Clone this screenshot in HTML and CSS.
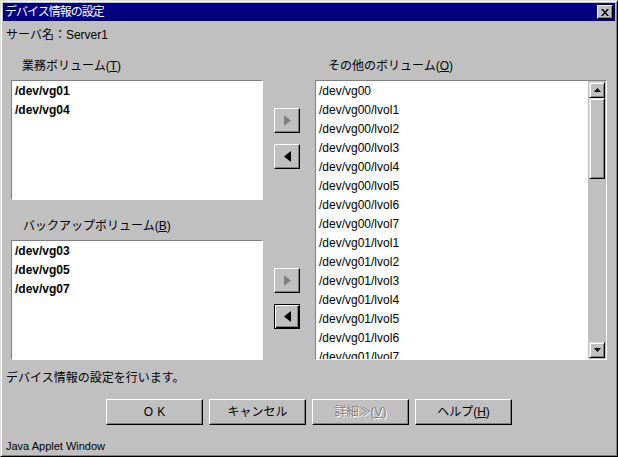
FILE: index.html
```html
<!DOCTYPE html>
<html lang="ja">
<head>
    <meta charset="UTF-8">
    <title>デバイス情報の設定</title>
    <link rel="stylesheet" href="styles.css">
</head>
<body>
    <div class="window">
        <!-- Title bar -->
        <div class="titlebar">
            <span class="title">デバイス情報の設定</span>
            <span class="close-btn">
                <svg width="8" height="7" viewBox="0 0 8 7"><path d="M0 0h2l2 2.4 2-2.4h2l-3 3.5 3 3.5h-2l-2-2.4-2 2.4h-2l3-3.5z" fill="#000"/></svg>
            </span>
        </div>

        <div class="client">
            <div class="server">サーバ名：Server1</div>

            <div class="main">
                <div class="left-col">
                    <div class="label">業務ボリューム(<u>T</u>)</div>
                    <div class="list list-short bold">
                        <div class="item">/dev/vg01</div>
                        <div class="item">/dev/vg04</div>
                    </div>
                    <div class="label label-second">バックアップボリューム(<u>B</u>)</div>
                    <div class="list list-short bold">
                        <div class="item">/dev/vg03</div>
                        <div class="item">/dev/vg05</div>
                        <div class="item">/dev/vg07</div>
                    </div>
                </div>

                <div class="move-col">
                    <div class="move-group move-group-top">
                        <div class="arrow-btn">
                            <svg width="9" height="11" viewBox="0 0 9 11"><polygon points="1,0 8,5.5 1,11" fill="#808080"/></svg>
                        </div>
                        <div class="arrow-btn">
                            <svg width="9" height="11" viewBox="0 0 9 11"><polygon points="8,0 1,5.5 8,11" fill="#000"/></svg>
                        </div>
                    </div>
                    <div class="move-group move-group-bottom">
                        <div class="arrow-btn">
                            <svg width="9" height="11" viewBox="0 0 9 11"><polygon points="1,0 8,5.5 1,11" fill="#808080"/></svg>
                        </div>
                        <div class="arrow-btn focused">
                            <svg width="9" height="11" viewBox="0 0 9 11"><polygon points="8,0 1,5.5 8,11" fill="#000"/></svg>
                        </div>
                    </div>
                </div>

                <div class="right-col">
                    <div class="label label-right">その他のボリューム(<u>O</u>)</div>
                    <div class="list list-tall">
                        <div class="list-items">
                            <div class="item">/dev/vg00</div>
                            <div class="item">/dev/vg00/lvol1</div>
                            <div class="item">/dev/vg00/lvol2</div>
                            <div class="item">/dev/vg00/lvol3</div>
                            <div class="item">/dev/vg00/lvol4</div>
                            <div class="item">/dev/vg00/lvol5</div>
                            <div class="item">/dev/vg00/lvol6</div>
                            <div class="item">/dev/vg00/lvol7</div>
                            <div class="item">/dev/vg01/lvol1</div>
                            <div class="item">/dev/vg01/lvol2</div>
                            <div class="item">/dev/vg01/lvol3</div>
                            <div class="item">/dev/vg01/lvol4</div>
                            <div class="item">/dev/vg01/lvol5</div>
                            <div class="item">/dev/vg01/lvol6</div>
                            <div class="item">/dev/vg01/lvol7</div>
                        </div>
                        <div class="scrollbar">
                            <div class="scroll-btn">
                                <svg width="7" height="4" viewBox="0 0 7 4"><polygon points="3.5,0 7,4 0,4" fill="#000"/></svg>
                            </div>
                            <div class="scroll-thumb"></div>
                            <div class="scroll-track"></div>
                            <div class="scroll-btn">
                                <svg width="7" height="4" viewBox="0 0 7 4"><polygon points="0,0 7,0 3.5,4" fill="#000"/></svg>
                            </div>
                        </div>
                    </div>
                </div>
            </div>

            <div class="message">デバイス情報の設定を行います。</div>

            <div class="actions">
                <div class="btn btn-ok">OK</div>
                <div class="btn">キャンセル</div>
                <div class="btn disabled">詳細≫(<u>V</u>)</div>
                <div class="btn">ヘルプ(<u>H</u>)</div>
            </div>

            <div class="status">Java Applet Window</div>
        </div>
    </div>
</body>
</html>
```

FILE: styles.css
```css
body {
    margin: 0;
    padding: 0;
    background-color: #c0c0c0;
    font-family: "Liberation Sans", "Noto Sans CJK JP", sans-serif;
    font-size: 12px;
    color: #000;
}

.window {
    width: 618px;
    height: 457px;
    box-sizing: border-box;
    border: 1px solid;
    border-color: #dfdfdf #000 #000 #dfdfdf;
    box-shadow: inset 1px 1px #fff, inset -1px -1px #808080;
    padding: 2px;
    display: flex;
    flex-direction: column;
    overflow: hidden;
}

/* Title bar */
.titlebar {
    height: 18px;
    flex-shrink: 0;
    background-color: #000080;
    color: #fff;
    display: flex;
    align-items: center;
    justify-content: space-between;
    padding: 0 2px;
}

.title {
    line-height: 18px;
    letter-spacing: -1px;
}

.close-btn {
    width: 16px;
    height: 14px;
    box-sizing: border-box;
    background-color: #c0c0c0;
    border: 1px solid;
    border-color: #fff #000 #000 #fff;
    box-shadow: inset -1px -1px #808080;
    display: flex;
    align-items: center;
    justify-content: center;
}

/* Client area */
.client {
    flex: 1;
    display: flex;
    flex-direction: column;
}

.server {
    padding: 6px 0 0 3px;
    line-height: 16px;
}

.main {
    display: flex;
    margin: 15px 0 0 8px;
}

.left-col {
    width: 252px;
    display: flex;
    flex-direction: column;
}

.label {
    line-height: 16px;
    height: 16px;
    padding: 0 0 6px 11px;
}

.label-second {
    padding-top: 18px;
    padding-left: 12px;
}

.label-right {
    padding-left: 13px;
}

.list {
    box-sizing: border-box;
    background-color: #fff;
    border: 1px solid;
    border-color: #808080 #fff #fff #808080;
    overflow: hidden;
}

.list-short {
    height: 120px;
    padding-top: 1px;
}

.list-tall {
    height: 280px;
    display: flex;
}

.item {
    line-height: 19px;
    height: 19px;
    padding-left: 3px;
    white-space: nowrap;
}

.bold .item {
    font-weight: bold;
}

.list-items {
    flex: 1;
    padding-top: 1px;
    overflow: hidden;
}

/* Move buttons */
.move-col {
    width: 26px;
    margin-left: 11px;
    display: flex;
    flex-direction: column;
}

.move-group {
    display: flex;
    flex-direction: column;
    gap: 11px;
}

.move-group-top {
    margin-top: 50px;
}

.move-group-bottom {
    margin-top: 99px;
}

.arrow-btn {
    width: 26px;
    height: 25px;
    box-sizing: border-box;
    border: 1px solid;
    border-color: #fff #000 #000 #fff;
    box-shadow: inset -1px -1px #808080;
    display: flex;
    align-items: center;
    justify-content: center;
}

.arrow-btn.focused {
    border-color: #000;
    box-shadow: inset 1px 1px #fff, inset -1px -1px #000, inset -2px -2px #808080;
}

.right-col {
    width: 292px;
    margin-left: 15px;
    display: flex;
    flex-direction: column;
}

/* Scrollbar */
.scrollbar {
    width: 18px;
    box-sizing: border-box;
    padding: 1px;
    background-color: #c0c0c0;
    display: flex;
    flex-direction: column;
}

.scroll-btn,
.scroll-thumb {
    box-sizing: border-box;
    border: 1px solid;
    border-color: #dfdfdf #000 #000 #dfdfdf;
    box-shadow: inset 1px 1px #fff, inset -1px -1px #808080;
}

.scroll-btn {
    height: 16px;
    display: flex;
    align-items: center;
    justify-content: center;
}

.scroll-thumb {
    height: 81px;
}

.scroll-track {
    flex: 1;
}

.message {
    margin: 10px 0 0 3px;
    line-height: 16px;
}

/* Dialog buttons */
.actions {
    margin-top: 13px;
    display: flex;
    justify-content: center;
    gap: 6px;
}

.btn {
    width: 97px;
    height: 26px;
    box-sizing: border-box;
    border: 1px solid;
    border-color: #fff #000 #000 #fff;
    box-shadow: inset -1px -1px #808080;
    display: flex;
    align-items: center;
    justify-content: center;
    line-height: 16px;
}

.btn-ok {
    letter-spacing: 4px;
    text-indent: 4px;
}

.btn.disabled {
    color: #808080;
    text-shadow: 1px 1px #fff;
}

.status {
    margin: 13px 0 0 3px;
    line-height: 16px;
    font-size: 11px;
}
```
